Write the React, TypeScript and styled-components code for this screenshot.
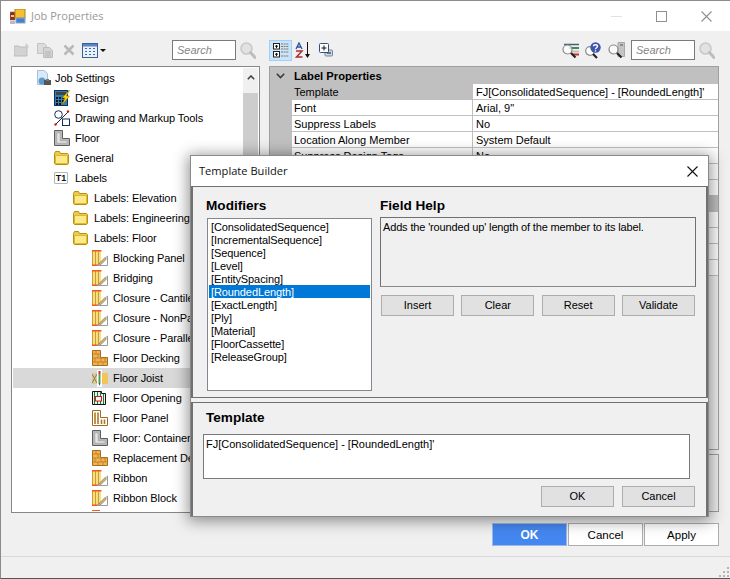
import React from "react";
import styled, { createGlobalStyle } from "styled-components";

const FONT = `"Liberation Sans", Arial, sans-serif`;

const GlobalStyle = createGlobalStyle`
  html, body { margin: 0; padding: 0; background: #f0f0f0; }
  body { font-family: ${FONT}; font-size: 11px; color: #000; }
  * { box-sizing: border-box; }
`;

/* icons */
const Svg = styled.svg`
  display: block;
  flex: none;
`;

const AppIcon = () => (
  <Svg width="16" height="15" viewBox="0 0 16 15">
    <rect x="0" y="3" width="5" height="8" fill="#a02020" stroke="#777" strokeWidth="0.6" />
    <rect x="1" y="6" width="3" height="2" fill="#f0d060" />
    <rect x="5" y="0" width="10" height="9" fill="#f5c030" stroke="#b08020" />
    <rect x="6" y="9" width="9" height="5" fill="#4a7fd0" stroke="#8aa8d0" />
    <rect x="0" y="12" width="5" height="3" fill="#bbb" />
  </Svg>
);

const DisabledFolder = () => (
  <Svg width="16" height="14" viewBox="0 0 16 14">
    <path d="M0 3h5l1 1h7v9H0z" fill="#d2d2d2" stroke="#bdbdbd" />
    <path d="M11 0l1 1.5L14 1l-.5 2L15.500 4l-2 .5L13 6l-1-1.500" fill="#c8c8c8" />
  </Svg>
);

const DisabledCopy = () => (
  <Svg width="16" height="15" viewBox="0 0 16 15">
    <path d="M.5.500h7l2 2v8h-9z" fill="#dcdcdc" stroke="#c4c4c4" />
    <path d="M6.500 4.500h6l3 3v7h-9z" fill="#d4d4d4" stroke="#bdbdbd" />
    <path d="M8 9h6M8 11h6M8 13h6" stroke="#b5b5b5" />
  </Svg>
);

const DisabledDelete = () => (
  <Svg width="12" height="12" viewBox="0 0 12 12">
    <path d="M1.500 1.500l9 9M10.500 1.500l-9 9" stroke="#b9b9b9" strokeWidth="2.600" />
  </Svg>
);

const TableIcon = () => (
  <Svg width="16" height="15" viewBox="0 0 16 15">
    <rect x=".5" y=".5" width="15" height="14" fill="#eaf1fb" stroke="#3a5f9a" />
    <rect x="1" y="1" width="14" height="2.500" fill="#5b84c4" />
    <path d="M3 5h2v1H3zM7 5h2v1H7zM11 5h2v1h-2zM3 8h2v1H3zM7 8h2v1H7zM11 8h2v1h-2zM3 11h2v1H3zM7 11h2v1H7zM11 11h2v1h-2z" fill="#3a6ab0" />
  </Svg>
);

const Caret = styled.div`
  width: 0;
  height: 0;
  margin: 1px 0 0 1px;
  border-left: 3px solid transparent;
  border-right: 3px solid transparent;
  border-top: 3px solid #111;
`;

const GreyLens = () => (
  <Svg width="16" height="17" viewBox="0 0 16 17">
    <circle cx="6.500" cy="6.500" r="5.500" fill="#e2e2e2" stroke="#c9c9c9" strokeWidth="1.600" />
    <path d="M10.500 10.500l4.500 5" stroke="#bdbdbd" strokeWidth="3" strokeLinecap="round" />
  </Svg>
);

const JobSettingsIcon = () => (
  <Svg width="16" height="16" viewBox="-2 0 16 16">
    <path d="M.5.500h7l3 3v11H.5z" fill="#dbe8f7" stroke="#a8c0dc" />
    <circle cx="5" cy="11" r="3.500" fill="#5a9bd0" />
    <rect x="7" y="10" width="7" height="5" fill="#555" />
    <path d="M9 9h3v2H9z" fill="#777" />
  </Svg>
);

const DesignIcon = () => (
  <Svg width="16" height="16" viewBox="0 0 16 16">
    <rect x=".5" y=".5" width="13" height="15" fill="#2f7fb8" stroke="#12305a" />
    <rect x="2" y="2" width="10" height="3" fill="#444" />
    <path d="M2 7h2v2H2zM5 7h2v2H5zM8 7h2v2H8zM2 10h2v2H2zM5 10h2v2H5zM8 10h2v2H8zM2 13h2v2H2zM5 13h2v2H5z" fill="#111" />
    <path d="M15.500 0L8 8h3l-3 7 7.500-9h-3z" fill="#ffd800" stroke="#8a7000" strokeWidth=".5" />
  </Svg>
);

const DrawingIcon = () => (
  <Svg width="16" height="16" viewBox="0 0 16 16">
    <circle cx="4.500" cy="4.500" r="3.800" fill="none" stroke="#12305a" />
    <path d="M1 15L14 2" stroke="#222" />
    <circle cx="1.500" cy="14.500" r="1.200" fill="#d01818" />
    <circle cx="14" cy="1.500" r="1.200" fill="#d01818" />
    <rect x="8.500" y="9" width="7" height="6.500" fill="#fff" stroke="#12305a" />
  </Svg>
);

const ContainerIcon = () => (
  <Svg width="16" height="16" viewBox="0 0 16 16">
    <path d="M.5.500h8v8h7v7H.5z" fill="#b8b8b8" stroke="#5e5e5e" />
    <path d="M3 3h3v8h7v2H3z" fill="#e6e6e6" stroke="#a0a0a0" strokeWidth=".5" />
  </Svg>
);

const FolderIcon = () => (
  <Svg width="16" height="14" viewBox="0 0 16 14">
    <path d="M.5 2.500l1-2h4l1 2h7l1 1v9l-1 1h-12l-1-1z" fill="#eec94f" stroke="#b98f10" />
    <path d="M1.500 4.500h12v8h-12z" fill="#fbe98a" stroke="#e0b82c" />
  </Svg>
);

const TagIcon = () => <TagBox>T1</TagBox>;

const JoistPencilIcon = () => (
  <Svg width="16" height="16" viewBox="0 0 16 16">
    <rect x="0" y="1" width="9" height="14" fill="#f8de7c" />
    <path d="M.5 1v14M3.500 1v14M6.500 1v14" stroke="#c99a3a" />
    <path d="M0 .8h9.500M0 15.200h9.500" stroke="#ef5a20" strokeWidth="1.500" />
    <path d="M5.500 15.500L15.500 6v9.500z" fill="#fff" stroke="#9a9a9a" />
    <path d="M7.500 13l5.500-5.500 1.500 1.500-5.500 5.500H7.500z" fill="#d6b06a" stroke="#777" strokeWidth=".6" />
  </Svg>
);

const DeckingIcon = () => (
  <Svg width="16" height="16" viewBox="0 0 16 16">
    <path d="M.5.500h8v7h7v8H.5z" fill="#f3b252" stroke="#a66c1f" />
    <path d="M1 4h7M1 8h14M1 12h14M4 1v3M6 4v4M3 8v4M9 8v4M13 8v4M6 12v3M11 12v3" stroke="#b87a24" strokeWidth=".8" />
  </Svg>
);

const JoistIcon = () => (
  <Svg width="16" height="17" viewBox="0 0 16 17">
    <path d="M0 3h5v11H0z" fill="#dccb9a" />
    <path d="M0 4l5 9M5 4l-5 9" stroke="#7a6a40" strokeWidth=".8" />
    <rect x="5" y="0" width="5" height="17" fill="#fff" />
    <rect x="6.500" y="1" width="2" height="3" fill="#d03030" />
    <rect x="6.500" y="4" width="2" height="9" fill="#50a050" />
    <path d="M6.500 13h2l-1 3z" fill="#555" />
    <rect x="10" y="3" width="6" height="11" fill="#f2c45c" />
  </Svg>
);

const OpeningIcon = () => (
  <Svg width="14" height="14" viewBox="0 0 14 14">
    <path d="M.5.500h9v2h4v11H.5z" fill="#fff" stroke="#111" />
    <path d="M2.500 1v12M5.500 1v12M8.500 1v12M11.500 3v10" stroke="#1f7a3a" strokeWidth="1.200" />
    <rect x="3.500" y="5.500" width="6" height="4.500" fill="#fff" stroke="#e01818" />
  </Svg>
);

const PanelIcon = () => (
  <Svg width="16" height="16" viewBox="0 0 16 16">
    <path d="M.5.500h8v7h7v8H.5z" fill="#fff" stroke="#a06a20" />
    <path d="M3 2.500V14M6 2.500V14" stroke="#a97a28" strokeWidth="1.600" />
    <path d="M9.500 9.500V14M12.500 9.500V14" stroke="#a97a28" strokeWidth="1.600" />
  </Svg>
);

const CategorizedIcon = () => (
  <Svg width="16" height="15" viewBox="0 0 16 15">
    <rect x=".5" y=".5" width="6" height="5.500" fill="#fff" stroke="#222" />
    <path d="M2 3.200h3M3.500 2v3" stroke="#111" />
    <rect x=".5" y="8.500" width="6" height="5.500" fill="#fff" stroke="#222" />
    <path d="M2 11.200h3M3.500 10v3" stroke="#111" />
    <path d="M8 1h8M8 3.500h8M8 6h8M8 9h8M8 13h8" stroke="#7a7a7a" strokeDasharray="2 .6" />
  </Svg>
);

const SortIcon = () => (
  <Svg width="16" height="16" viewBox="0 0 16 16">
    <path d="M1 7l3-6 3 6M2.200 5h3.600" fill="none" stroke="#2a52a0" strokeWidth="1.300" />
    <path d="M1 9h6L1.500 15H7.500" fill="none" stroke="#a83030" strokeWidth="1.500" />
    <path d="M12.500 0v14" stroke="#111" />
    <path d="M10 12h5l-2.500 4z" fill="#111" />
  </Svg>
);

const ExpandIcon = () => (
  <Svg width="14" height="14" viewBox="0 0 14 14">
    <rect x="6" y="7" width="7.500" height="6" rx="1" fill="#cfd8e4" stroke="#6d87a8" />
    <rect x=".5" y=".5" width="9" height="9" rx="1" fill="#fff" stroke="#31527d" />
    <path d="M2.500 5h5M5 2.500v5" stroke="#111" />
    <path d="M8 10h4" stroke="#111" />
  </Svg>
);

const LensBase = ({ children }: { children: React.ReactNode }) => (
  <Svg width="17" height="17" viewBox="0 0 17 17">
    {children}
    <circle cx="5.500" cy="7.500" r="4.500" fill="#fff" fillOpacity=".75" stroke="#8a8a8a" strokeWidth="1.200" />
    <path d="M9 11l4.500 4.500" stroke="#222" strokeWidth="2.200" />
  </Svg>
);

const LensListIcon = () => (
  <LensBase>
    <path d="M2 2.500h15" stroke="#4a5a78" strokeWidth="1.500" />
    <path d="M7 6h10" stroke="#3b8e4a" strokeWidth="2" />
    <path d="M9 9.500h8" stroke="#c2c2c2" strokeWidth="2" />
    <path d="M11 12.500h6" stroke="#c83030" strokeWidth="2" />
  </LensBase>
);

const LensHelpIcon = () => (
  <Svg width="17" height="17" viewBox="0 0 17 17">
    <circle cx="5" cy="9" r="4.300" fill="#fff" stroke="#8a8a8a" strokeWidth="1.200" />
    <path d="M8 12l4 4" stroke="#222" strokeWidth="2.200" />
    <circle cx="10.500" cy="5.500" r="5.200" fill="#3c55ad" />
    <path d="M8.500 4.300c0-2 4-2 4 0 0 1.500-2 1.500-2 3M10.500 8.200v1.400" fill="none" stroke="#fff" strokeWidth="1.400" />
  </Svg>
);

const LensPageIcon = () => (
  <LensBase>
    <path d="M10 .5h6.500v14H10z" fill="#c4c4c4" stroke="#a8a8a8" />
    <path d="M12 3h3" stroke="#555" />
  </LensBase>
);

const CloseGlyph = ({ color }: { color: string }) => (
  <Svg width="11" height="11" viewBox="0 0 11 11">
    <path d="M.5.500l10 10M10.500.500l-10 10" stroke={color} strokeWidth="1.100" />
  </Svg>
);

const Chevron = () => (
  <Svg width="9" height="6" viewBox="0 0 9 6">
    <path d="M.8.800L4.500 4.500 8.200.8" fill="none" stroke="#3c3c3c" strokeWidth="1.600" />
  </Svg>
);

const ScrollUpGlyph = () => (
  <Svg width="8" height="5" viewBox="0 0 8 5">
    <path d="M.8 4.300L4 1l3.200 3.300" fill="none" stroke="#444" strokeWidth="1.600" />
  </Svg>
);

const Grip = () => (
  <Svg width="10" height="10" viewBox="0 0 10 10">
    <path d="M8 0h2v2H8zM4 4h2v2H4zM8 4h2v2H8zM0 8h2v2H0zM4 8h2v2H4zM8 8h2v2H8z" fill="#b4b4b4" />
  </Svg>
);

/* window */
const Window = styled.div`
  position: relative;
  width: 730px;
  height: 579px;
  overflow: hidden;
  background: #f0f0f0;
  border-top: 1px solid #8c8c8c;
  border-left: 1px solid #8c8c8c;
  border-bottom: 1px solid #555;
  display: flex;
  flex-direction: column;
`;

const TitleBar = styled.div`
  height: 30px;
  flex: none;
  background: #fff;
  display: flex;
  align-items: center;
  padding: 0 18px 0 9px;
`;

const WindowTitle = styled.span`
  margin: 0 0 1px 5px;
  font-family: "Open Sans", ${FONT};
  font-size: 11px;
  color: #999;
`;

const WindowControls = styled.div`
  margin-left: auto;
  display: flex;
  align-items: center;
  gap: 34px;
`;

const MinimizeGlyph = styled.div`
  width: 11px;
  height: 1px;
  background: #e2e2e2;
`;

const MaximizeGlyph = styled.div`
  width: 11px;
  height: 11px;
  border: 1px solid #8f8f8f;
`;

const Main = styled.div`
  display: grid;
  grid-template-columns: 249px 450px;
  column-gap: 9px;
  padding-left: 10px;
  flex: none;
`;

const Pane = styled.div`
  display: flex;
  flex-direction: column;
  min-width: 0;
`;

const Toolbar = styled.div`
  height: 35px;
  flex: none;
  display: flex;
  align-items: center;
  padding-top: 3px;
`;

const ToolSlot = styled.div<{ $width: number }>`
  width: ${(p) => p.$width}px;
  display: flex;
  align-items: center;
  justify-content: center;
  flex: none;
`;

const ToolActive = styled(ToolSlot)`
  height: 21px;
  background: #cce4f7;
  border: 1px solid #99d1ff;
`;

const ToolSpacer = styled.div`
  flex: 1;
`;

const SearchBox = styled.div`
  width: 64px;
  height: 20px;
  flex: none;
  margin-left: 3px;
  background: #fff;
  border: 1px solid #7a7a7a;
  padding-left: 4px;
  display: flex;
  align-items: center;
  font-style: italic;
  color: #858585;
`;

/* tree */
const TreeBox = styled.div`
  height: 447px;
  display: flex;
  background: #fff;
  border: 1px solid #82878c;
  overflow: hidden;
`;

const TreeList = styled.div`
  flex: 1;
  min-width: 0;
  padding: 1px 0 0 1px;
`;

const TreeRow = styled.div<{ $level: number; $selected?: boolean }>`
  height: 20px;
  display: flex;
  align-items: center;
  padding-left: ${(p) => 22 + p.$level * 19}px;
  background: ${(p) => (p.$selected ? "#d9d9d9" : "transparent")};
  letter-spacing: -0.08px;
  white-space: nowrap;
`;

const TreeIconSlot = styled.div<{ $level: number }>`
  width: ${(p) => (p.$level > 0 ? 21 : 20)}px;
  flex: none;
  display: flex;
  align-items: center;
`;

const TagBox = styled.div`
  width: 14px;
  height: 12px;
  border: 1px solid #b5b5b5;
  border-radius: 1px;
  background: #fff;
  font-size: 9px;
  font-weight: bold;
  line-height: 10px;
  text-align: center;
  color: #111;
`;

const PartialMark = styled.div`
  width: 8px;
  height: 1px;
  margin-left: 79px;
  margin-top: 2px;
  background: #ef5a20;
`;

const ScrollBar = styled.div`
  width: 15px;
  flex: none;
  margin: 1px 1px 0 0;
  background: #f0f0f0;
  display: flex;
  flex-direction: column;
`;

const ScrollArrow = styled.div`
  height: 25px;
  display: flex;
  justify-content: center;
  padding-top: 7px;
`;

const ScrollThumb = styled.div`
  height: 200px;
  background: #cdcdcd;
`;

/* property grid */
const PropertyGrid = styled.div`
  height: 384px;
  background: #f0f0f0;
  border: 1px solid #a0a0a0;
  overflow: hidden;
`;

const CategoryRow = styled.div<{ $tall?: boolean }>`
  height: ${(p) => (p.$tall ? 17 : 16)}px;
  background: #c0c0c0;
  display: flex;
  align-items: center;
  font-size: 11.2px;
  font-weight: bold;
  white-space: nowrap;
`;

const ChevronSlot = styled.div`
  width: 24px;
  flex: none;
  display: flex;
  justify-content: center;
  padding-right: 3px;
`;

const PropRow = styled.div`
  height: 16px;
  display: grid;
  grid-template-columns: 22px 180px 1fr;
  background: #c0c0c0;
`;

const PropLabel = styled.div<{ $selected?: boolean }>`
  background: ${(p) => (p.$selected ? "#c0c0c0" : "#fff")};
  border-bottom: 1px solid #c0c0c0;
  padding-left: 2px;
  line-height: 16px;
  white-space: nowrap;
  overflow: hidden;
`;

const PropValue = styled.div`
  background: #fff;
  border-left: 1px solid #c0c0c0;
  border-bottom: 1px solid #c0c0c0;
  padding-left: 3px;
  line-height: 16px;
  white-space: nowrap;
  overflow: hidden;
`;

const DescriptionPanel = styled.div`
  height: 58px;
  margin-top: 4px;
  background: #f0f0f0;
  border: 1px solid #a0a0a0;
`;

/* footer */
const Footer = styled.div`
  height: 43px;
  flex: none;
  display: flex;
  justify-content: flex-end;
  gap: 1px;
  padding: 10px 11px 0 0;
`;

const FooterButton = styled.div<{ $primary?: boolean }>`
  width: 75px;
  height: 23px;
  display: flex;
  align-items: center;
  justify-content: center;
  font-size: ${(p) => (p.$primary ? 12 : 11.5)}px;
  background: ${(p) => (p.$primary ? "#4587f0" : "#fff")};
  color: ${(p) => (p.$primary ? "#fff" : "#000")};
  font-weight: ${(p) => (p.$primary ? "bold" : "normal")};
  border: 1px solid ${(p) => (p.$primary ? "#9db8e8" : "#adadad")};
`;

const StatusBar = styled.div`
  flex: 1;
  border-top: 1px solid #d9d9d9;
  display: flex;
  justify-content: flex-end;
  align-items: flex-end;
  padding: 0 1px 1px 0;
`;

/* dialog */
const Dialog = styled.div`
  position: absolute;
  left: 189px;
  top: 154px;
  width: 519px;
  height: 362px;
  background: #f0f0f0;
  border: 1px solid #8a8a8a;
  box-shadow: 0 2px 14px 2px rgba(0, 0, 0, 0.42);
  display: flex;
  flex-direction: column;
`;

const DialogTitleBar = styled.div`
  height: 30px;
  flex: none;
  background: #fff;
  display: flex;
  align-items: center;
  justify-content: space-between;
  padding: 0 10px 0 8px;
`;

const DialogTitle = styled.span`
  margin-bottom: 1px;
  font-family: "Open Sans", ${FONT};
  font-size: 11.1px;
  color: #111;
`;

const TopSection = styled.div`
  height: 212px;
  flex: none;
  border: 1px solid #707070;
  border-right-width: 2px;
  border-left-width: 2px;
  display: grid;
  grid-template-columns: 165px 316px;
  column-gap: 8px;
  padding: 10px 0 0 14px;
`;

const BottomSection = styled.div`
  flex: 1;
  margin-top: 4px;
  border-top: 1px solid #707070;
  border-left: 2px solid #707070;
  border-right: 2px solid #707070;
  padding: 6px 16px 0 10px;
  display: flex;
  flex-direction: column;
`;

const Column = styled.div`
  display: flex;
  flex-direction: column;
`;

const SectionHeading = styled.div<{ $inset?: number; $height?: number }>`
  height: ${(p) => p.$height ?? 21}px;
  font-size: 13.6px;
  font-weight: bold;
  line-height: 18px;
  margin-left: ${(p) => p.$inset ?? 0}px;
`;

const ModifierList = styled.div`
  height: 173px;
  background: #fff;
  border: 1px solid #828790;
  padding: 1px;
`;

const ModifierItem = styled.div<{ $selected?: boolean }>`
  height: 13px;
  line-height: 14px;
  padding-left: 2px;
  letter-spacing: -0.1px;
  white-space: nowrap;
  background: ${(p) => (p.$selected ? "#0078d7" : "transparent")};
  color: ${(p) => (p.$selected ? "#fff" : "#000")};
`;

const HelpBox = styled.div`
  height: 70px;
  margin-top: -1px;
  background: #f0f0f0;
  border: 1px solid #707070;
  border-bottom-color: #8a8a8a;
  padding: 3px 2px;
  line-height: 13px;
  letter-spacing: -0.15px;
`;

const ButtonRow = styled.div`
  display: grid;
  grid-template-columns: 73px 73px 73px 73px;
  justify-content: space-between;
  margin-top: 8px;
  padding: 0 1px;
`;

const DialogButton = styled.div`
  height: 21px;
  display: flex;
  align-items: center;
  justify-content: center;
  padding-bottom: 1px;
  background: #e1e1e1;
  border: 1px solid #adadad;
`;

const TemplateBox = styled.div`
  height: 45px;
  background: #fff;
  border: 1px solid #7a7a7a;
  padding: 3px 2px;
  line-height: 13px;
`;

const DialogActions = styled.div`
  display: flex;
  justify-content: flex-end;
  gap: 8px;
  margin: 7px -5px 0 0;
`;

const ActionButton = styled(DialogButton)`
  width: 73px;
`;

type TreeItem = { label: string; level: number; icon: React.ReactNode; selected?: boolean };

const treeItems: TreeItem[] = [
  { label: "Job Settings", level: 0, icon: <JobSettingsIcon /> },
  { label: "Design", level: 1, icon: <DesignIcon /> },
  { label: "Drawing and Markup Tools", level: 1, icon: <DrawingIcon /> },
  { label: "Floor", level: 1, icon: <ContainerIcon /> },
  { label: "General", level: 1, icon: <FolderIcon /> },
  { label: "Labels", level: 1, icon: <TagIcon /> },
  { label: "Labels: Elevation", level: 2, icon: <FolderIcon /> },
  { label: "Labels: Engineering", level: 2, icon: <FolderIcon /> },
  { label: "Labels: Floor", level: 2, icon: <FolderIcon /> },
  { label: "Blocking Panel", level: 3, icon: <JoistPencilIcon /> },
  { label: "Bridging", level: 3, icon: <JoistPencilIcon /> },
  { label: "Closure - Cantilever", level: 3, icon: <JoistPencilIcon /> },
  { label: "Closure - NonParallel", level: 3, icon: <JoistPencilIcon /> },
  { label: "Closure - Parallel", level: 3, icon: <JoistPencilIcon /> },
  { label: "Floor Decking", level: 3, icon: <DeckingIcon /> },
  { label: "Floor Joist", level: 3, icon: <JoistIcon />, selected: true },
  { label: "Floor Opening", level: 3, icon: <OpeningIcon /> },
  { label: "Floor Panel", level: 3, icon: <PanelIcon /> },
  { label: "Floor: Container", level: 3, icon: <ContainerIcon /> },
  { label: "Replacement Decking", level: 3, icon: <DeckingIcon /> },
  { label: "Ribbon", level: 3, icon: <JoistPencilIcon /> },
  { label: "Ribbon Block", level: 3, icon: <JoistPencilIcon /> },
];

const labelRows = [
  ["Template", "FJ[ConsolidatedSequence] - [RoundedLength]'"],
  ["Font", 'Arial, 9"'],
  ["Suppress Labels", "No"],
  ["Location Along Member", "System Default"],
  ["Suppress Design Tags", "No"],
  ["", ""],
  ["", ""],
];

const modifiers = [
  "[ConsolidatedSequence]",
  "[IncrementalSequence]",
  "[Sequence]",
  "[Level]",
  "[EntitySpacing]",
  "[RoundedLength]",
  "[ExactLength]",
  "[Ply]",
  "[Material]",
  "[FloorCassette]",
  "[ReleaseGroup]",
];

export default function App() {
  return (
    <Window>
      <GlobalStyle />
      <TitleBar>
        <AppIcon />
        <WindowTitle>Job Properties</WindowTitle>
        <WindowControls>
          <MinimizeGlyph />
          <MaximizeGlyph />
          <CloseGlyph color="#8f8f8f" />
        </WindowControls>
      </TitleBar>

      <Main>
        <Pane>
          <Toolbar>
            <ToolSlot $width={22}><DisabledFolder /></ToolSlot>
            <ToolSlot $width={24}><DisabledCopy /></ToolSlot>
            <ToolSlot $width={24}><DisabledDelete /></ToolSlot>
            <ToolSlot $width={18}><TableIcon /></ToolSlot>
            <Caret />
            <ToolSpacer />
            <SearchBox>Search</SearchBox>
            <ToolSlot $width={24}><GreyLens /></ToolSlot>
          </Toolbar>
          <TreeBox>
            <TreeList>
              {treeItems.map((item) => (
                <TreeRow key={item.label} $level={item.level} $selected={item.selected}>
                  <TreeIconSlot $level={item.level}>{item.icon}</TreeIconSlot>
                  {item.label}
                </TreeRow>
              ))}
              <PartialMark />
            </TreeList>
            <ScrollBar>
              <ScrollArrow><ScrollUpGlyph /></ScrollArrow>
              <ScrollThumb />
            </ScrollBar>
          </TreeBox>
        </Pane>

        <Pane>
          <Toolbar>
            <ToolActive $width={23}><CategorizedIcon /></ToolActive>
            <ToolSlot $width={22}><SortIcon /></ToolSlot>
            <ToolSlot $width={24}><ExpandIcon /></ToolSlot>
            <ToolSpacer />
            <ToolSlot $width={23}><LensListIcon /></ToolSlot>
            <ToolSlot $width={23}><LensHelpIcon /></ToolSlot>
            <ToolSlot $width={23}><LensPageIcon /></ToolSlot>
            <SearchBox>Search</SearchBox>
            <ToolSlot $width={24}><GreyLens /></ToolSlot>
          </Toolbar>
          <PropertyGrid>
            <CategoryRow $tall>
              <ChevronSlot><Chevron /></ChevronSlot>
              Label Properties
            </CategoryRow>
            {labelRows.map(([label, value], i) => (
              <PropRow key={i}>
                <span />
                <PropLabel $selected={i === 0}>{label}</PropLabel>
                <PropValue>{value}</PropValue>
              </PropRow>
            ))}
            <CategoryRow />
            {[0, 1, 2, 3].map((i) => (
              <PropRow key={i}>
                <span />
                <PropLabel />
                <PropValue />
              </PropRow>
            ))}
          </PropertyGrid>
          <DescriptionPanel />
        </Pane>
      </Main>

      <Footer>
        <FooterButton $primary>OK</FooterButton>
        <FooterButton>Cancel</FooterButton>
        <FooterButton>Apply</FooterButton>
      </Footer>
      <StatusBar><Grip /></StatusBar>

      <Dialog>
        <DialogTitleBar>
          <DialogTitle>Template Builder</DialogTitle>
          <CloseGlyph color="#111" />
        </DialogTitleBar>
        <TopSection>
          <Column>
            <SectionHeading $inset={-1}>Modifiers</SectionHeading>
            <ModifierList>
              {modifiers.map((m) => (
                <ModifierItem key={m} $selected={m === "[RoundedLength]"}>{m}</ModifierItem>
              ))}
            </ModifierList>
          </Column>
          <Column>
            <SectionHeading>Field Help</SectionHeading>
            <HelpBox>Adds the 'rounded up' length of the member to its label.</HelpBox>
            <ButtonRow>
              <DialogButton>Insert</DialogButton>
              <DialogButton>Clear</DialogButton>
              <DialogButton>Reset</DialogButton>
              <DialogButton>Validate</DialogButton>
            </ButtonRow>
          </Column>
        </TopSection>
        <BottomSection>
          <SectionHeading $inset={3} $height={25}>Template</SectionHeading>
          <TemplateBox>FJ[ConsolidatedSequence] - [RoundedLength]'</TemplateBox>
          <DialogActions>
            <ActionButton>OK</ActionButton>
            <ActionButton>Cancel</ActionButton>
          </DialogActions>
        </BottomSection>
      </Dialog>
    </Window>
  );
}
